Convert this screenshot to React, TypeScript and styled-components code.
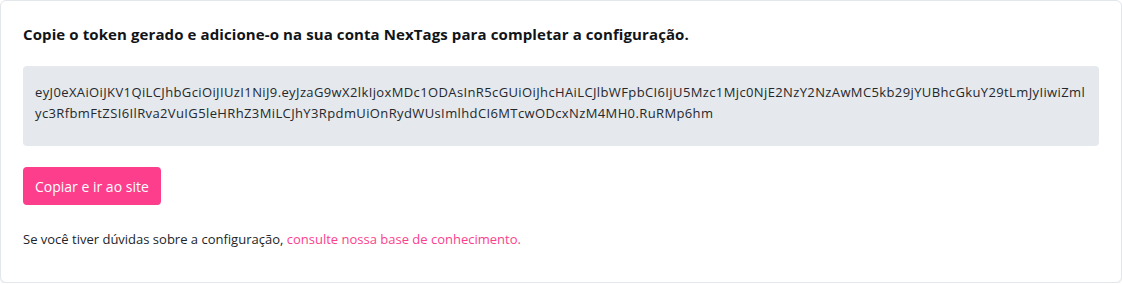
import styled, { createGlobalStyle } from "styled-components";

const GlobalStyle = createGlobalStyle`
    html, body {
        margin: 0;
        padding: 0;
        background: #ffffff;
    }
    body {
        font-family: "Open Sans", "Noto Sans", "Liberation Sans", sans-serif;
        color: #212529;
    }
`

const Card = styled.div`
    box-sizing: border-box;
    width: 1122px;
    height: 283px;
    border: 1px solid #e3e6ea;
    border-radius: 6px;
    box-shadow: 0 1px 1px rgba(0, 0, 0, 0.08);
    background: #ffffff;
    padding: 22px 22px 0 22px;
    display: flex;
    flex-direction: column;
    align-items: flex-start;
`

const Title = styled.h2`
    margin: 0;
    font-size: 15px;
    font-weight: 700;
    line-height: 22px;
    letter-spacing: 0.1px;
    color: #111418;
`

const TokenBox = styled.div`
    box-sizing: border-box;
    margin-top: 21px;
    width: 100%;
    height: 80px;
    background: #e5e9ed;
    border-radius: 4px;
    padding: 16px 12px 0 12px;
    font-size: 13px;
    line-height: 21px;
    letter-spacing: 0.38px;
    color: #24282c;
    word-break: break-all;
`

const PrimaryButton = styled.button`
    margin-top: 21px;
    height: 38px;
    padding: 0 12px;
    border: none;
    border-radius: 4px;
    background: #fd3e8d;
    color: #ffffff;
    font-family: inherit;
    font-size: 14px;
    font-weight: 500;
    cursor: pointer;
`

const HelpText = styled.p`
    margin: 24px 0 0 0;
    font-size: 13px;
    line-height: 20px;
    color: #212529;
`

const HelpLink = styled.a`
    color: #fd3e8d;
    text-decoration: none;
`

const token =
    "eyJ0eXAiOiJKV1QiLCJhbGciOiJIUzI1NiJ9.eyJzaG9wX2lkIjoxMDc1ODAsInR5cGUiOiJhcHAiLCJlbWFpbCI6IjU5Mzc1Mjc0NjE2NzY2NzAwMC5kb29jYUBhcGkuY29tLmJyIiwiZmlyc3RfbmFtZSI6IlRva2VuIG5leHRhZ3MiLCJhY3RpdmUiOnRydWUsImlhdCI6MTcwODcxNzM4MH0.RuRMp6hm";

export default function App() {
    return (
        <>
            <GlobalStyle />
            <Card>
                <Title>Copie o token gerado e adicione-o na sua conta NexTags para completar a configuração.</Title>
                <TokenBox>{token}</TokenBox>
                <PrimaryButton>Copiar e ir ao site</PrimaryButton>
                <HelpText>
                    Se você tiver dúvidas sobre a configuração,{" "}
                    <HelpLink href="#">consulte nossa base de conhecimento.</HelpLink>
                </HelpText>
            </Card>
        </>
    );
}
